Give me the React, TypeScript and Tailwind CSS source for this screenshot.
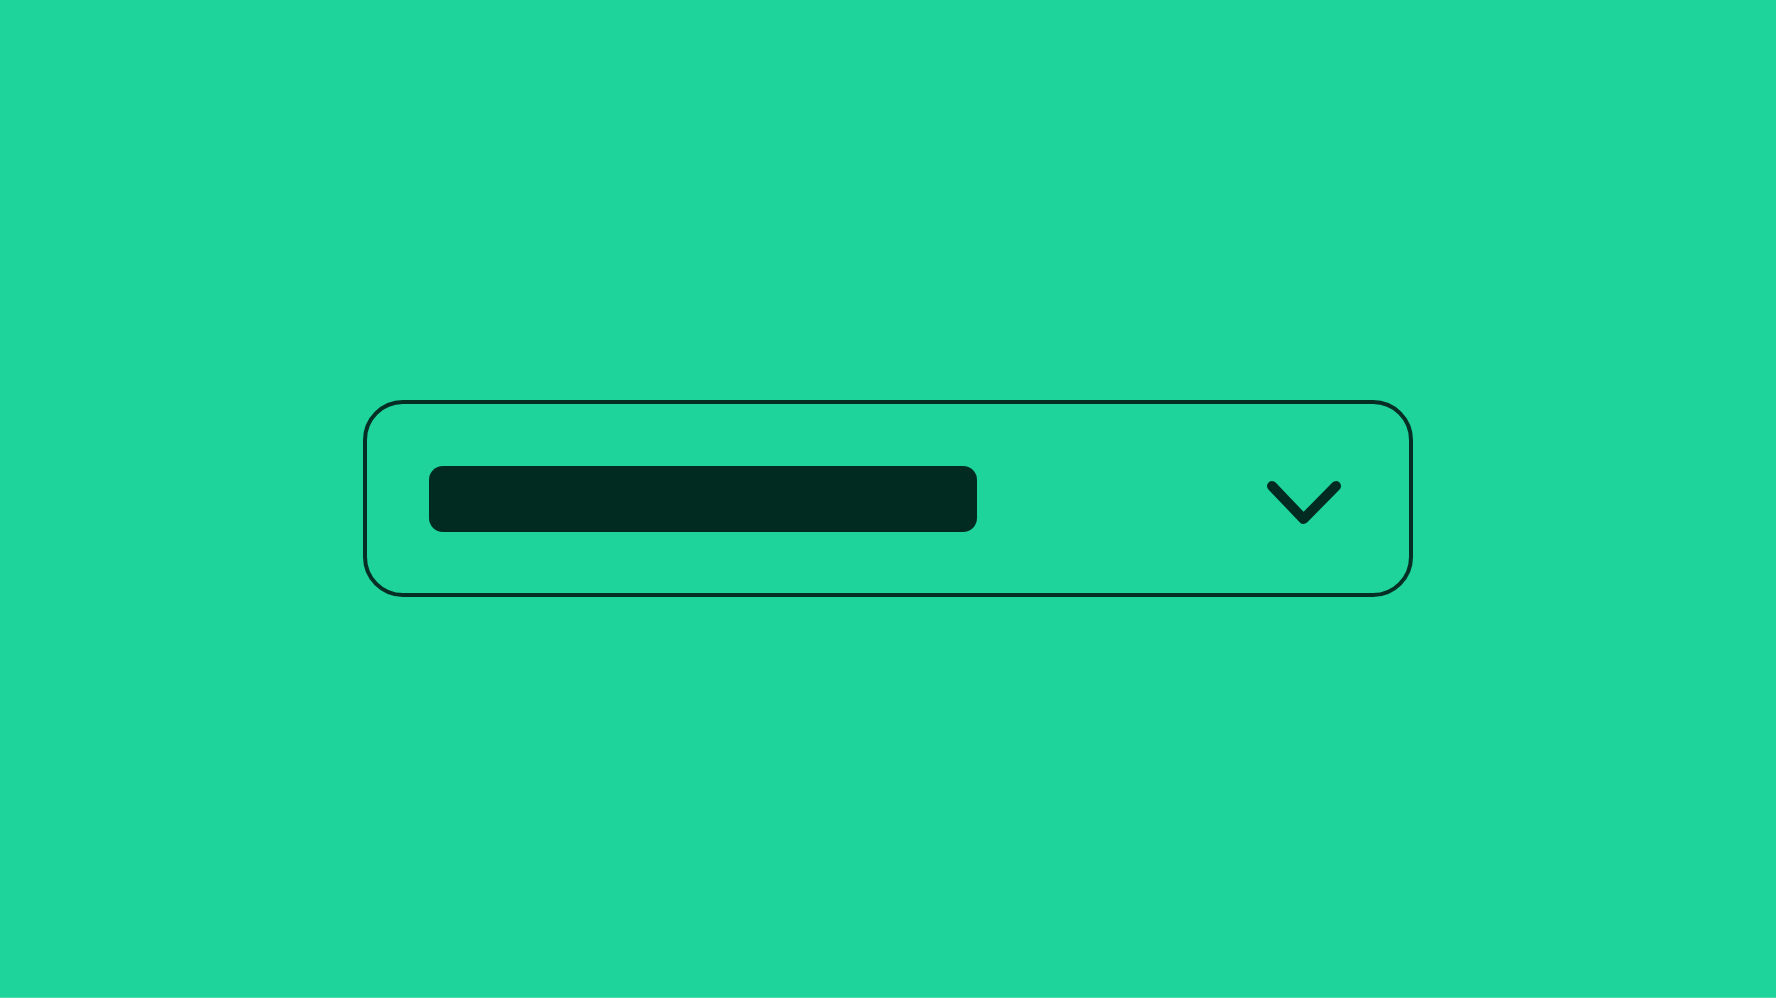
export default function App() {
  return (
    <div className="flex h-screen w-full flex-col bg-[#1ed49b]">
      <div className="flex flex-1 items-center justify-center">
        <div className="flex h-[197px] w-[1050px] items-center justify-between rounded-[40px] border-4 border-[#062f23] pl-[62px] pr-[66px]">
          <div className="h-[66px] w-[548px] rounded-[14px] bg-[#012b20]" />
          <svg
            className="mt-[9px] shrink-0"
            width="78"
            height="46"
            viewBox="0 0 78 46"
            fill="none"
            stroke="#012b20"
            strokeWidth="10"
            strokeLinecap="round"
            strokeLinejoin="round"
          >
            <path d="M7 6 L38.5 39 L71 6" />
          </svg>
        </div>
      </div>
      <div className="h-px w-full bg-[#4fdcb0]" />
    </div>
  );
}
